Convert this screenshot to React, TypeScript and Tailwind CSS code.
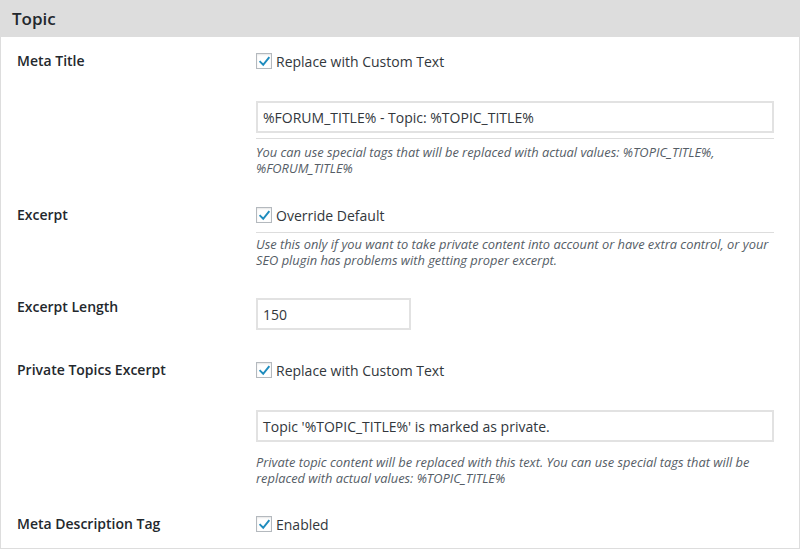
import React from "react";

const font = { fontFamily: '"Open Sans", "Noto Sans", sans-serif' };

function Check({ label }: { label: string }) {
  return (
    <label className="flex items-center h-5 text-[14px] text-[#32373c]">
      <span className="w-4 h-4 border border-[#b4b9be] bg-white flex items-center justify-center shadow-[inset_0_1px_2px_rgba(0,0,0,0.1)]">
        <svg width="13" height="13" viewBox="0 0 20 20">
          <path d="M3.5 10.5 L8 15 L16.5 4.5" fill="none" stroke="#1e8cbe" strokeWidth="3" strokeLinecap="square" />
        </svg>
      </span>
      <span className="ml-[4px]">{label}</span>
    </label>
  );
}

function Input({ value, w }: { value: string; w?: string }) {
  return (
    <div
      className={`${w ?? "w-full"} h-8 border-2 border-[#e2e2e2] bg-white flex items-center px-[5px] text-[14px] text-[#32373c]`}
    >
      {value}
    </div>
  );
}

function Row({ label, pb, children }: { label: string; pb: string; children: React.ReactNode }) {
  return (
    <div className={`flex pt-[14px] ${pb}`}>
      <div className="w-[255px] shrink-0 pl-4 text-[14px] leading-5 font-semibold text-[#23282d]">{label}</div>
      <div className="flex-1 pr-[25px]">{children}</div>
    </div>
  );
}

const descCls = "text-[12.85px] leading-[16px] italic text-[#555d66]";

export default function App() {
  return (
    <div style={font} className="w-[800px] h-[550px] bg-white">
      <div className="h-[549px] border-x border-b border-[#dddddd] flex flex-col">
        <div className="h-[38px] bg-[#dddddd] flex items-center pl-[11px] text-[17px] font-semibold text-[#23282d]">
          Topic
        </div>
        <Row label="Meta Title" pb="pb-[15px]">
          <Check label="Replace with Custom Text" />
          <div className="mt-[30px]">
            <Input value="%FORUM_TITLE% - Topic: %TOPIC_TITLE%" />
          </div>
          <div className={`border-t border-[#dddddd] mt-[5px] pt-[5px] ${descCls}`}>
            You can use special tags that will be replaced with actual values: %TOPIC_TITLE%, %FORUM_TITLE%
          </div>
        </Row>
        <Row label="Excerpt" pb="pb-[15px]">
          <Check label="Override Default" />
          <div className={`border-t border-[#dddddd] mt-[7px] pt-[3px] ${descCls}`}>
            Use this only if you want to take private content into account or have extra control, or your SEO plugin has problems with getting proper excerpt.
          </div>
        </Row>
        <Row label="Excerpt Length" pb="pb-[16px]">
          <div className="mt-[1px]">
            <Input value="150" w="w-[155px]" />
          </div>
        </Row>
        <Row label="Private Topics Excerpt" pb="pb-[14px]">
          <Check label="Replace with Custom Text" />
          <div className="mt-[30px]">
            <Input value="Topic '%TOPIC_TITLE%' is marked as private." />
          </div>
          <div className={`mt-[12px] ${descCls}`}>
            Private topic content will be replaced with this text. You can use special tags that will be replaced with actual values: %TOPIC_TITLE%
          </div>
        </Row>
        <Row label="Meta Description Tag" pb="pb-[14px]">
          <Check label="Enabled" />
        </Row>
      </div>
    </div>
  );
}
